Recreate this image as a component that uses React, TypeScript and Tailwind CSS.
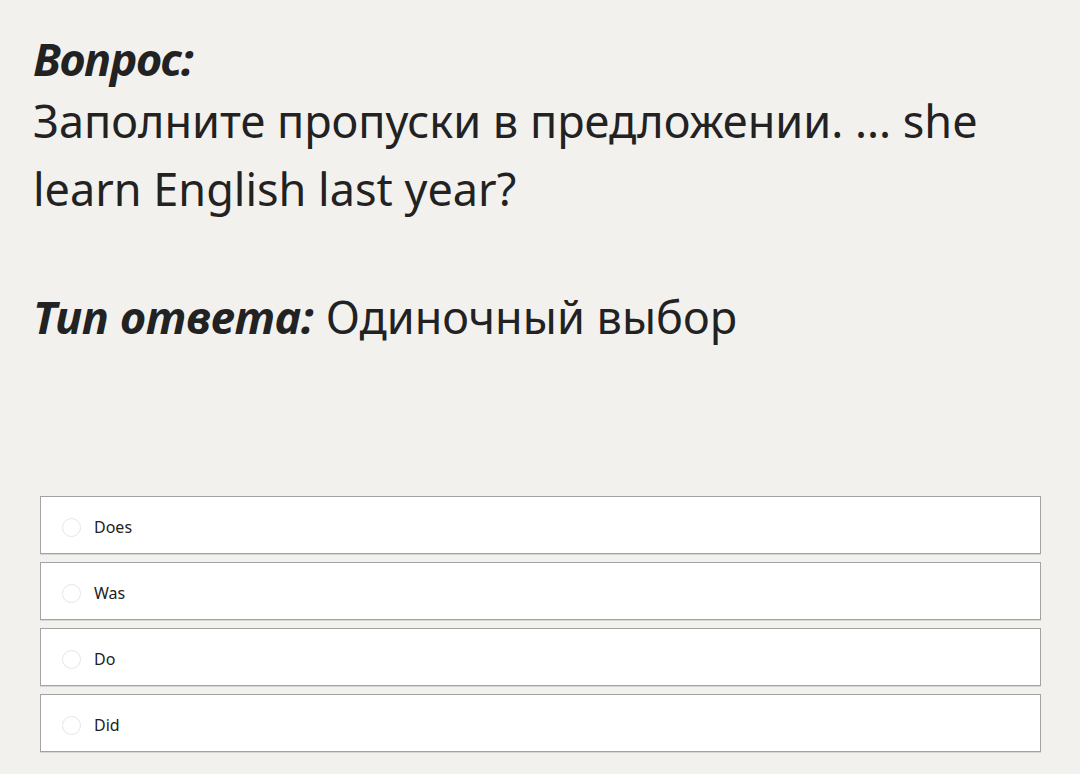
const options = ["Does", "Was", "Do", "Did"];

const App = () => {
  return (
    <div
      className="min-h-[774px] w-[1080px] bg-[#f2f1ee] text-[#222222]"
      style={{ fontFamily: '"Noto Sans", "Open Sans", sans-serif' }}
    >
      <div className="px-[33px] pt-[31px]">
        <div className="text-[45px] font-bold italic leading-[56px] tracking-[-1px]">Вопрос:</div>
        <p className="text-[45px] leading-[68px]">
          Заполните пропуски в предложении. ... she learn English last year?
        </p>
        <p className="mt-[64px] text-[45px] leading-[60px]">
          <span className="font-bold italic">Тип ответа:</span> Одиночный выбор
        </p>
      </div>
      <div className="mt-[149px] flex flex-col gap-2 pl-[40px] pr-[39px]">
        {options.map((o) => (
          <label
            key={o}
            className="flex h-[58px] items-center border border-[#a3a3a3] bg-white pt-[4px] shadow-[0_1px_0_#d6d6d2]"
          >
            <span className="ml-[21px] h-[19px] w-[19px] rounded-full border border-[#e6e6e6] bg-white" />
            <span className="ml-[13px] text-[16px] text-[#222222]">{o}</span>
          </label>
        ))}
      </div>
    </div>
  );
};

export default App;
